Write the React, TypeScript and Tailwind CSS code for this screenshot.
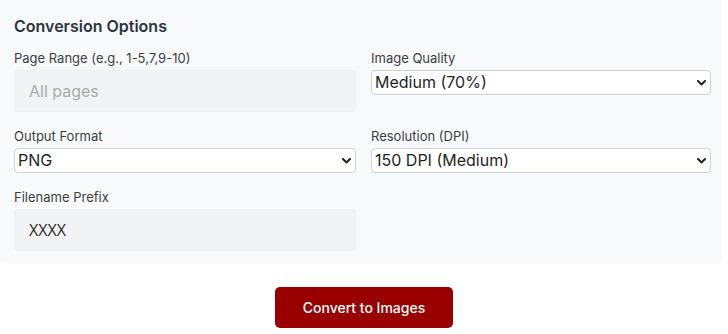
import React from "react";

const font = { fontFamily: "Inter, 'Open Sans', sans-serif" };

function Chevron() {
  return (
    <svg
      className="pointer-events-none absolute right-[5px] top-1/2 -translate-y-1/2"
      width="9"
      height="6"
      viewBox="0 0 9 6"
      fill="none"
    >
      <path d="M1 1l3.5 3.5L8 1" stroke="#222" strokeWidth="2" strokeLinecap="round" strokeLinejoin="round" />
    </svg>
  );
}

function SelectField({ label, value, options }: { label: string; value: string; options: string[] }) {
  return (
    <div className="flex flex-col">
      <label className="mb-[2px] text-[13px] leading-5 text-[#3b3f45]">{label}</label>
      <div className="relative">
        <select
          defaultValue={value}
          className="h-[25px] w-full appearance-none rounded-[4px] border border-[#cfd2d6] bg-white pl-[3px] pr-6 text-[16px] leading-[23px] text-[#1f1f1f]"
        >
          {options.map((o) => (
            <option key={o}>{o}</option>
          ))}
        </select>
        <Chevron />
      </div>
    </div>
  );
}

function TextField({ label, placeholder, value }: { label: string; placeholder?: string; value?: string }) {
  return (
    <div className="flex flex-col">
      <label className="mb-[2px] text-[13px] leading-5 text-[#3b3f45]">{label}</label>
      <input
        defaultValue={value}
        placeholder={placeholder}
        className="h-[42px] w-full rounded-[3px] border border-[#eef0f2] bg-[#f2f3f5] px-[14px] text-[16px] text-[#2b2b2b] placeholder:text-[#a9abae]"
        style={value ? { fontFamily: "'Open Sans', sans-serif" } : undefined}
      />
    </div>
  );
}

export default function App() {
  return (
    <div className="min-h-[334px] w-[728px] bg-white" style={font}>
      <div className="w-[722px] rounded-b-[6px] bg-[#f8f9fb] pb-[13px] pl-[14px] pr-[11px] pt-[14px]">
        <h2 className="mb-[10px] text-[16px] font-semibold leading-6 text-[#2d3440]">Conversion Options</h2>
        <div className="grid grid-cols-[342px_340px] gap-x-[15px] gap-y-[14px]">
          <TextField label="Page Range (e.g., 1-5,7,9-10)" placeholder="All pages" />
          <SelectField
            label="Image Quality"
            value="Medium (70%)"
            options={["High (90%)", "Medium (70%)", "Low (50%)"]}
          />
          <SelectField label="Output Format" value="PNG" options={["PNG", "JPEG", "WEBP"]} />
          <SelectField
            label="Resolution (DPI)"
            value="150 DPI (Medium)"
            options={["72 DPI (Low)", "150 DPI (Medium)", "300 DPI (High)"]}
          />
          <TextField label="Filename Prefix" value="XXXX" />
        </div>
      </div>
      <div className="mt-[23px] flex justify-center">
        <button className="h-[41px] w-[178px] rounded-[5px] bg-[#990000] text-[14px] font-medium text-white">
          Convert to Images
        </button>
      </div>
    </div>
  );
}
